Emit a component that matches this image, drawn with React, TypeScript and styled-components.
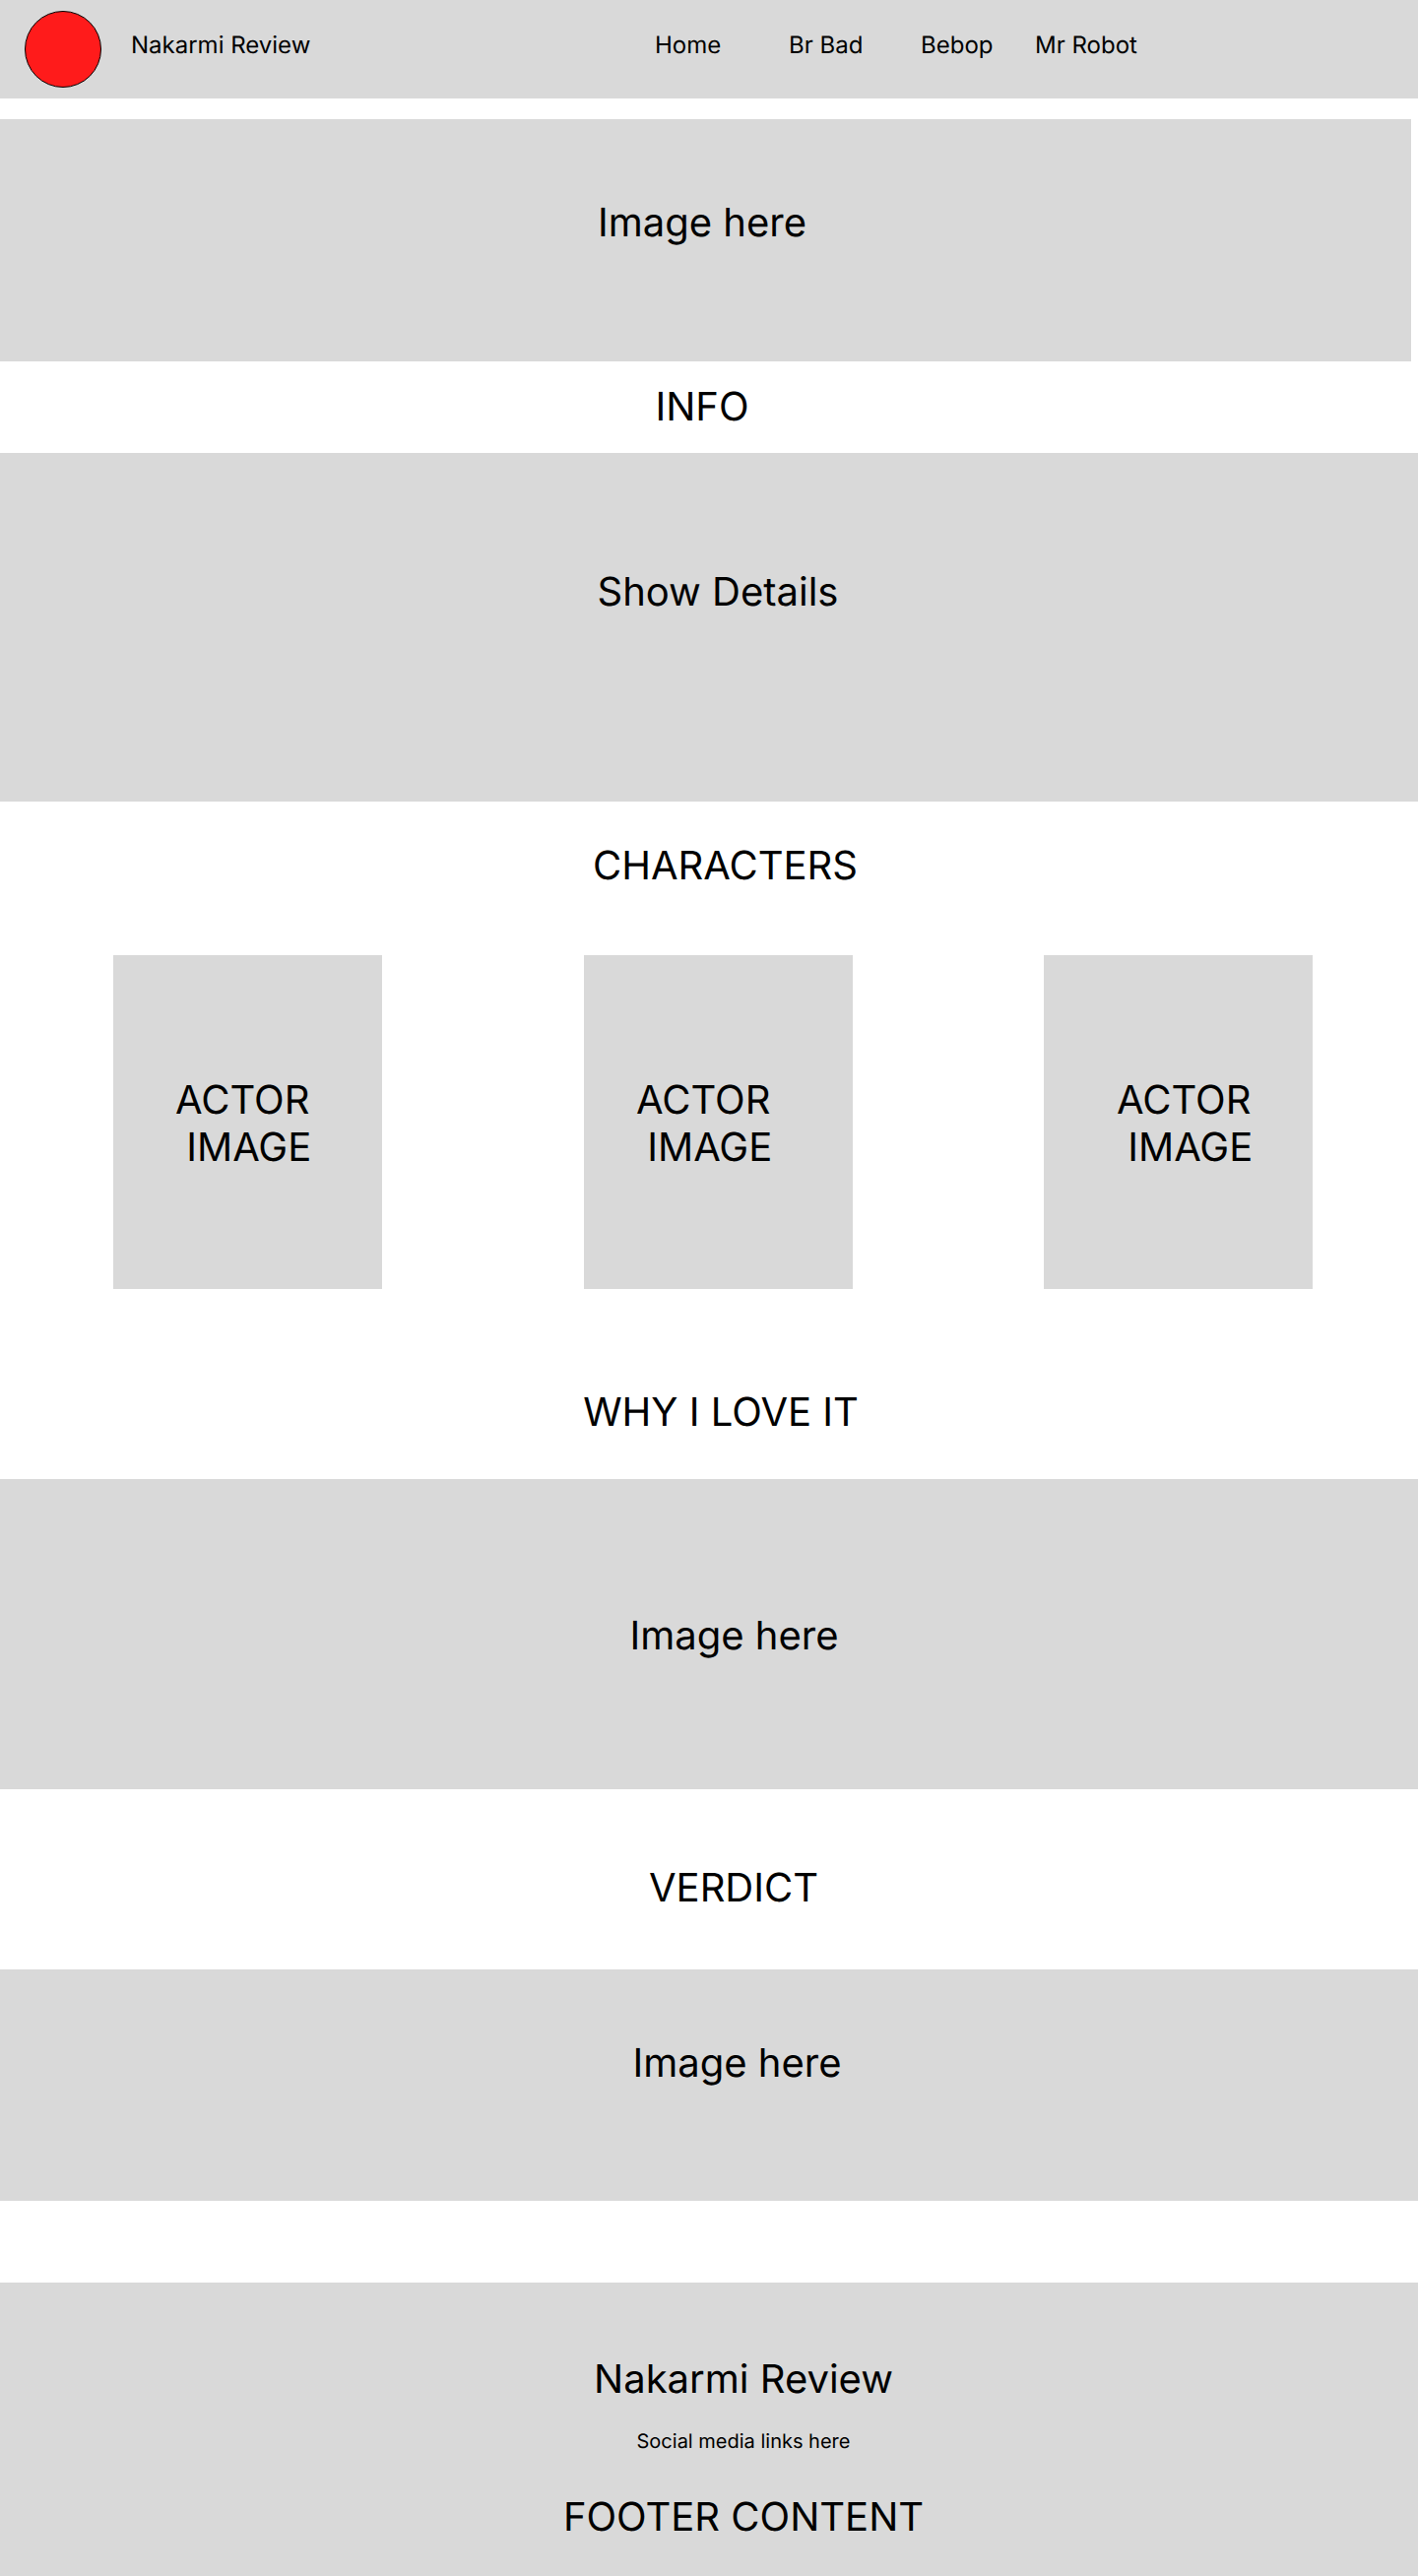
import React from 'react';
import styled, { createGlobalStyle } from 'styled-components';

const GlobalStyle = createGlobalStyle`
  *, *::before, *::after { box-sizing: border-box; }
  body {
    margin: 0;
    background: #ffffff;
    color: #000000;
    font-family: Inter, "Liberation Sans", sans-serif;
    text-rendering: geometricPrecision;
  }
`;

const Header = styled.header`
  display: grid;
  grid-template-columns: calc(50% - 55px) 1fr;
  background: #d9d9d9;
  font-size: 24px;
  line-height: 29px;
`;

const Brand = styled.div`
  display: flex;
  gap: 30px;
  padding: 11px 0 11px 25px;
`;

const Logo = styled.span`
  width: 78px;
  height: 78px;
  flex: none;
  border: 1px solid #000000;
  border-radius: 50%;
  background: #ff1b1b;
`;

const BrandName = styled.span`
  padding-top: 20px;
`;

const Nav = styled.nav`
  display: grid;
  grid-template-columns: 136px 134px 116px auto;
  justify-content: start;
  align-items: start;
  padding-top: 31px;
`;

const NavLink = styled.a`
  color: inherit;
  text-decoration: none;
  white-space: nowrap;
`;

type Spacing = { $top: number; $bottom: number; $left?: number; $right?: number };

const Heading = styled.h2<Spacing>`
  margin: 0;
  padding: ${(p) => `${p.$top}px ${p.$right ?? 0}px ${p.$bottom}px ${p.$left ?? 0}px`};
  font-size: 40px;
  font-weight: 400;
  line-height: 48px;
  text-align: center;
`;

const Panel = styled.section<Spacing>`
  padding: ${(p) => `${p.$top}px ${p.$right ?? 0}px ${p.$bottom}px ${p.$left ?? 0}px`};
  background: #d9d9d9;
  font-size: 40px;
  line-height: 48px;
  text-align: center;
`;

const Hero = styled(Panel)`
  margin: 21px 7px 0 0;
`;

const Cast = styled.div`
  display: grid;
  grid-template-columns: 478fr 467fr 273fr;
  padding: 0 107px 0 115px;
`;

const ActorCard = styled.div<{ $indent: number }>`
  width: 273px;
  padding: 123px 0 120px ${(p) => p.$indent}px;
  background: #d9d9d9;
  font-size: 40px;
  line-height: 48px;
  white-space: pre;
`;

const Footer = styled.footer`
  display: flex;
  flex-direction: column;
  align-items: center;
  margin-top: 83px;
  padding: 74px 0 36px 70px;
  background: #d9d9d9;
  font-size: 40px;
  line-height: 48px;
`;

const Social = styled.p`
  margin: 27px 0 41px;
  font-size: 20px;
  line-height: 24px;
`;

const links = ['Home', 'Br Bad', 'Bebop', 'Mr Robot'];
const castIndents = [63, 53, 74];

export default function App() {
  return (
    <>
      <GlobalStyle />
      <Header>
        <Brand>
          <Logo />
          <BrandName>Nakarmi Review</BrandName>
        </Brand>
        <Nav>
          {links.map((label) => (
            <NavLink key={label} href="#">{label}</NavLink>
          ))}
        </Nav>
      </Header>
      <main>
        <Hero $top={81} $bottom={117} $right={7}>Image here</Hero>
        <Heading $top={22} $bottom={23} $right={14}>INFO</Heading>
        <Panel $top={117} $bottom={189} $left={18}>Show Details</Panel>
        <Heading $top={41} $bottom={67} $left={33}>CHARACTERS</Heading>
        <Cast>
          {castIndents.map((indent) => (
            <ActorCard key={indent} $indent={indent}>{'ACTOR\n IMAGE'}</ActorCard>
          ))}
        </Cast>
        <Heading $top={101} $bottom={44} $left={24}>WHY I LOVE IT</Heading>
        <Panel $top={135} $bottom={132} $left={51}>Image here</Panel>
        <Heading $top={76} $bottom={59} $left={50}>VERDICT</Heading>
        <Panel $top={71} $bottom={116} $left={57}>Image here</Panel>
      </main>
      <Footer>
        <span>Nakarmi Review</span>
        <Social>Social media links here</Social>
        <span>FOOTER CONTENT</span>
      </Footer>
    </>
  );
}
